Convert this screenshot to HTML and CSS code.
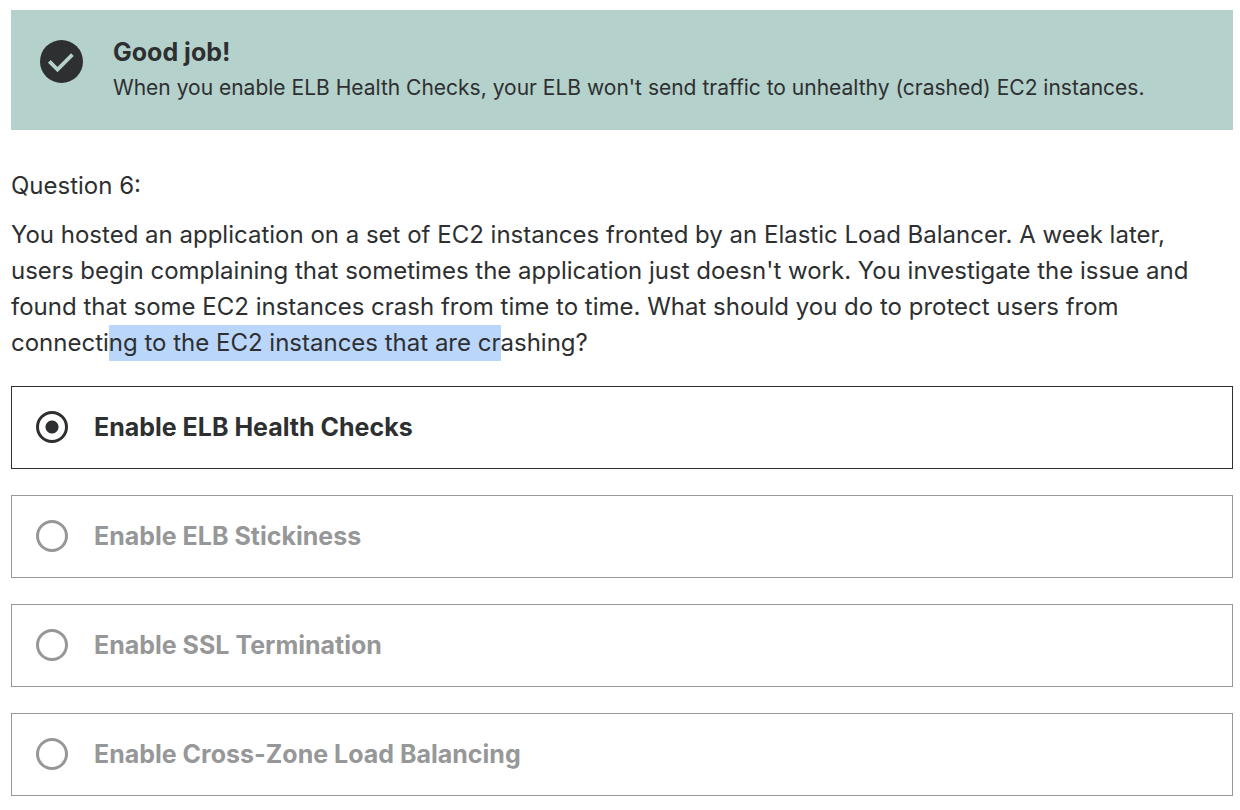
FILE: index.html
```html
<!DOCTYPE html>
<html lang="en">
<head>
<meta charset="utf-8">
<meta name="viewport" content="width=device-width, initial-scale=1">
<title>Question 6</title>
<link rel="stylesheet" href="styles.css">
</head>
<body>
<main class="quiz">
  <section class="feedback" role="status">
    <svg class="feedback-icon" viewBox="0 0 43 43" aria-hidden="true">
      <circle cx="21.5" cy="21.5" r="21.5" fill="#2d2f31"/>
      <path d="M9.3 21.3l8.2 8.2L32.4 14.6" fill="none" stroke="#b5d1cb" stroke-width="3.8"/>
    </svg>
    <div class="feedback-body">
      <h2 class="feedback-title">Good job!</h2>
      <p class="feedback-text">When you enable ELB Health Checks, your ELB won't send traffic to unhealthy (crashed) EC2 instances.</p>
    </div>
  </section>
  <form class="question">
    <p class="question-number">Question 6:</p>
    <p class="question-text" id="prompt">You hosted an application on a set of EC2 instances fronted by an Elastic Load Balancer. A week later, users begin complaining that sometimes the application just doesn't work. You investigate the issue and found that some EC2 instances crash from time to time. What should you do to protect users from connecti<mark class="selection">ng to the EC2 instances that are cr</mark>ashing?</p>
    <div class="answers" role="radiogroup" aria-labelledby="prompt">
      <label class="answer answer-selected"><input class="radio" type="radio" name="answer" checked><span>Enable ELB Health Checks</span></label>
      <label class="answer"><input class="radio" type="radio" name="answer" disabled><span>Enable ELB Stickiness</span></label>
      <label class="answer"><input class="radio" type="radio" name="answer" disabled><span>Enable SSL Termination</span></label>
      <label class="answer"><input class="radio" type="radio" name="answer" disabled><span>Enable Cross-Zone Load Balancing</span></label>
    </div>
  </form>
</main>
</body>
</html>
```
FILE: styles.css
```css
* { box-sizing: border-box; }
body { margin: 0; background: #fff; color: #2d2f31; font-family: Inter, "Liberation Sans", sans-serif; }
.quiz { padding: 10px 7px 15px 11px; }
.feedback { display: flex; gap: 30px; padding: 24px 29px; min-height: 120px; background: #b5d1cb; }
.feedback-icon { flex: none; width: 43px; height: 43px; margin-top: 6px; }
.feedback-title { margin: 0; font-size: 25px; line-height: 36px; font-weight: 700; }
.feedback-text { margin: 0; font-size: 21px; line-height: 36px; }
.question-number { margin: 38px 0 13px; font-size: 24px; line-height: 36px; }
.question-text { margin: 0 0 25px; font-size: 24px; line-height: 36px; }
.selection { padding: 3px 0 4px; background: #bbd6fb; color: inherit; }
.answers { display: grid; gap: 26px; }
.answer { display: flex; align-items: center; gap: 26px; min-height: 83px; padding: 19px 24px 21px; border: 1px solid #989898; color: #969798; font-size: 25px; line-height: 36px; font-weight: 700; }
.answer-selected { border-color: #2d2f31; color: #2d2f31; }
.radio { appearance: none; flex: none; width: 32px; height: 32px; margin: 0; border: 3px solid currentColor; border-radius: 50%; color: inherit; }
.radio:checked { background: radial-gradient(circle, currentColor 6px, transparent 7px); }
```
